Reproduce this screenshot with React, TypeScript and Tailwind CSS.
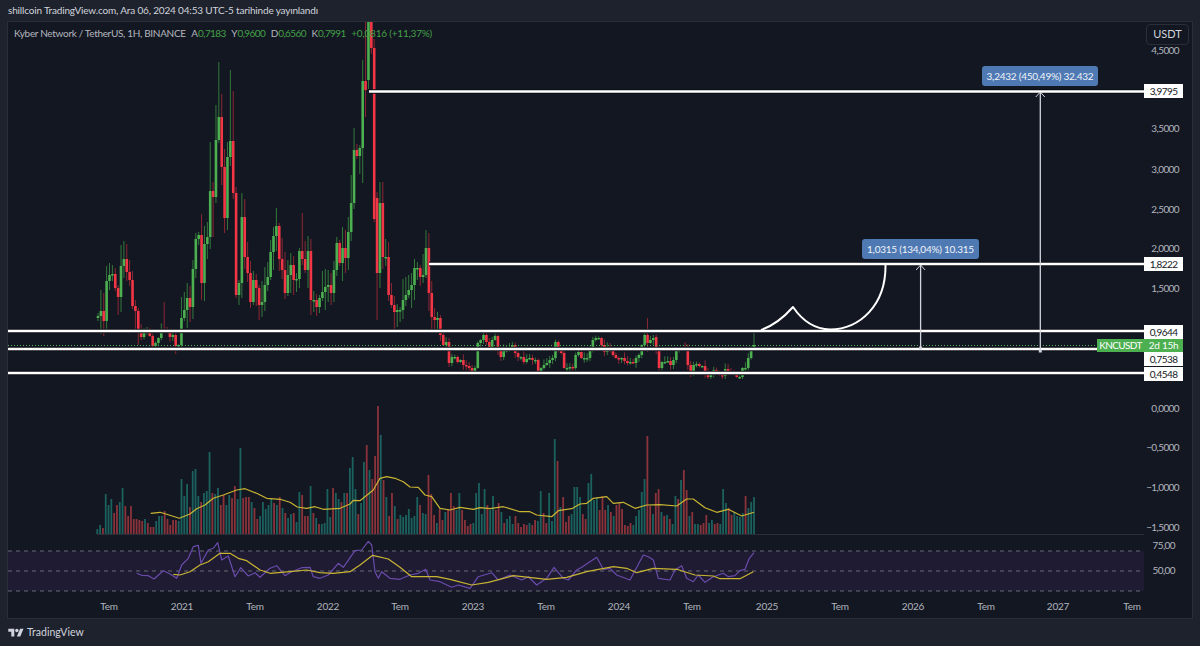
// KNCUSDT chart snapshot. Everything in the drawings is in page pixels (viewBox = page coords).
const closes = [
  316, 311, 321, 281, 275, 274, 288, 297, 266, 259, 272, 280, 306, 311, 330, 337, 333, 331, 336, 346, 343, 338, 329, 331, 332, 337, 335, 346,
  345, 318, 310, 298, 307, 269, 239, 235, 283, 244, 237, 191, 197, 140, 117, 167, 218, 157, 141, 193, 295, 283, 217, 257, 273, 302,
  280, 288, 305, 302, 285, 277, 252, 236, 226, 259, 270, 293, 275, 265, 280, 279, 251, 259, 270, 251, 300, 300, 307, 298, 292, 287, 285, 293, 270, 243, 263, 248, 258, 232, 203, 150, 156, 148, 81,
  90, 22, 48, 219, 273, 203, 257, 257, 295, 305, 312, 310, 310, 300, 295, 290, 285, 268, 268, 277, 275, 248, 293, 317, 320, 318, 335,
  345, 342, 363, 357, 357, 362, 360, 365, 366, 368, 373, 368, 343, 340, 335, 342, 347, 340, 336, 350, 357, 350, 350, 347, 345, 353, 357, 357, 362, 359, 358, 360, 360, 372, 368, 365, 363, 360, 358, 342, 350, 353, 368, 368, 367, 368, 355, 352, 358, 358, 358, 350,
  340, 338, 338, 345, 352, 347, 350, 355, 358, 359, 358, 361, 363, 362, 363, 358, 355, 345, 335, 343, 340, 338, 350, 368, 362, 362, 361, 365, 360, 350, 349, 348, 349, 365, 373, 365, 364, 366, 366, 373, 377, 375, 370, 372, 375, 376, 369, 372, 373, 374, 377, 377, 368, 368, 358, 350, 345,
];

// hand-read opens and wicks where the generated ones would be visibly wrong
const opens: Record<number, number> = { 94: 80, 97: 198, 194: 337, 93: 81 };
const highs: Record<number, number> = { 23: 302, 39: 142, 41: 105, 42: 62, 43: 94, 46: 70, 47: 91, 50: 193, 62: 208, 71: 213, 88: 175, 89: 128, 93: 20, 94: 10, 95: 10, 98: 182, 191: 318, 228: 333 };
const lows: Record<number, number> = { 27: 354, 36: 300, 40: 237, 49: 305, 74: 315, 92: 183, 93: 117, 97: 320, 191: 352, 195: 373 };

const candleStep = (754 - 98) / (closes.length - 1);

const candles = closes.map((c, i) => {
  const o = opens[i] ?? (i === 0 ? 318 : closes[i - 1]);
  const top = Math.min(o, c);
  const bottom = Math.max(o, c);
  const amp = top < 325 ? 3 : 0.8;
  return {
    x: 98 + i * candleStep,
    top,
    bottom: Math.max(bottom, top + 1.5),
    up: c <= o,
    high: highs[i] ?? top - (1 + ((i * 13) % 7)) * amp,
    low: lows[i] ?? Math.min(bottom + (1 + ((i * 5) % 6)) * amp, 379),
  };
});

// negative = red bar
const volumes = [
  5, 9, -6, 40, 29, 35, -21, -29, 32, 46, -28, -18, -28, -15, -15, -14, -13, 15, -11, -7, -7, 13, 18, 18, -23, -15, -9, -14, -14, 13, 55, 38, 50, -27, 63, 65, 38, -32, 41, 43, 82, -41, 40, 46, -29, -39, 29, 39, -36, -48, 35, 86, -36, -37, -37, 32, -26, -15, 18, 32, 25, 29, 35, -31, 29, -37, 26, -21, 16, 20, -21, 12, 42, -39, -18, -18, 48, -21, 16, -10, 10, 11, 45, 17, -46, 41, 35, -32, 41, -41, 66, 77, 45, -20, 31, 72, -89, 64, -55, -78, -128, 99, -54, 37, -18, -41, 28, -15, 19, 17, 19, 25, 16, 18, 37, -29, 21, 20, -59, -40, -19, 11,
  -25, -14, 22, -25, -41, -28, 24, 41, -24, -14, -8, -10, 11, 41, 51, 20, 45, -29, 24, 38, -24, -31, 22, -11, 15, 18, 10, -18, -11, -7, -10, -9, 11, -9, -14, 13, 43, -21, -11, 41, 13, 95, -73, 27, -37, -12, -18, 20, 47, 47, 37, -20, -15, 51, 60, 34, 37, -24, -38, -24, 29, -22, 18, -29, -31, -25, -9, -8, -11, 9, 18, 24, 42, 55, -98, -28, 20, -41, -45, 22, -18, 19, -15, 10, 38, -35, 54, -64, -44, 18, -22, 10, 10, -9, -11, -19, 11, 14, -10, -11, 10, 45, 31, -26, -19, 22, 18, 17, 21, -38, 26, 32, 37,
];
const volumeStep = (754 - 97.3) / (volumes.length - 1);

const pairs = (list: number[][], ox: number, oy: number) =>
  list.map(([x, y]) => `${(ox + x / 3).toFixed(1)},${(oy + y / 3).toFixed(1)}`).join(" ");

const volumeMa =
  pairs([[182, 340], [210, 337], [230, 343], [268, 355], [300, 342], [320, 326], [345, 315], [370, 295], [400, 285], [440, 270], [465, 266], [500, 280], [530, 295], [570, 298], [600, 307], [622, 321], [650, 325], [675, 320], [700, 328], [750, 325], [780, 312], [790, 301], [810, 302], [850, 270], [870, 235], [890, 230], [915, 235], [940, 245], [960, 261], [985, 262], [1005, 285], [1025, 290], [1050, 325]], 90, 400) +
  " " +
  pairs([[0, 325], [30, 330], [60, 322], [100, 328], [120, 323], [150, 326], [190, 320], [240, 335], [270, 335], [290, 345], [335, 350], [355, 332], [395, 326], [420, 312], [440, 310], [460, 295], [500, 290], [520, 310], [550, 307], [585, 325], [620, 315], [660, 314], [710, 318], [740, 297], [760, 297], [795, 323], [830, 337], [865, 328], [905, 348], [942, 337]], 440, 400);

const rsi =
  pairs([[410, 130], [425, 136], [445, 137], [462, 147], [490, 122], [510, 132], [530, 145], [545, 105], [565, 85], [580, 50], [595, 46], [603, 100], [625, 60], [640, 55], [653, 38], [665, 90], [685, 78], [705, 140], [722, 113], [745, 138], [765, 128], [780, 142], [810, 115], [830, 107], [855, 137], [875, 125], [905, 113], [930, 112], [940, 140], [960, 145], [985, 135], [1015, 100], [1030, 112], [1065, 62], [1085, 60], [1105, 34], [1115, 45], [1125, 125], [1135, 145], [1145, 125], [1170, 145]], 0, 530) +
  " " +
  pairs([[0, 148], [30, 135], [55, 130], [77, 118], [90, 150], [120, 155], [155, 172], [175, 165], [210, 175], [235, 140], [275, 128], [295, 150], [330, 135], [365, 150], [385, 140], [410, 165], [440, 145], [462, 112], [490, 145], [505, 150], [530, 120], [545, 112], [590, 82], [610, 118], [630, 115], [650, 135], [690, 150], [730, 75], [745, 80], [760, 90], [775, 145], [810, 150], [825, 120], [845, 107], [860, 145], [880, 155], [895, 135], [915, 157], [940, 140], [970, 130], [985, 140], [1005, 137], [1020, 122], [1035, 118], [1048, 85], [1062, 68]], 400, 530);

const rsiMa =
  pairs([[520, 133], [540, 135], [570, 125], [600, 105], [625, 95], [660, 70], [690, 70], [715, 85], [740, 92], [780, 120], [810, 130], [870, 125], [920, 120], [960, 128], [1000, 130], [1050, 125], [1080, 105], [1118, 76], [1165, 87]], 0, 530) +
  " " +
  pairs([[0, 112], [35, 140], [110, 140], [150, 148], [215, 165], [265, 157], [340, 137], [440, 148], [500, 142], [560, 125], [640, 110], [680, 115], [710, 128], [760, 115], [830, 118], [885, 135], [940, 138], [960, 146], [1020, 146], [1060, 125]], 400, 530);

const levels = [
  { y: 91.5, from: 369 },
  { y: 264, from: 429 },
  { y: 331, from: 8 },
  { y: 349, from: 8 },
  { y: 373, from: 8 },
];

const priceTicks = [
  { label: "4,5000", y: 50 },
  { label: "3,5000", y: 128 },
  { label: "3,0000", y: 169 },
  { label: "2,5000", y: 209 },
  { label: "2,0000", y: 248 },
  { label: "1,5000", y: 288 },
  { label: "0,0000", y: 408 },
  { label: "−0,5000", y: 447 },
  { label: "−1,0000", y: 487 },
  { label: "−1,5000", y: 527 },
];

const timeTicks = [
  { label: "Tem", x: 109 },
  { label: "2021", x: 182 },
  { label: "Tem", x: 255 },
  { label: "2022", x: 328 },
  { label: "Tem", x: 400 },
  { label: "2023", x: 473 },
  { label: "Tem", x: 546 },
  { label: "2024", x: 619 },
  { label: "Tem", x: 692 },
  { label: "2025", x: 767 },
  { label: "Tem", x: 840 },
  { label: "2026", x: 913 },
  { label: "Tem", x: 986 },
  { label: "2027", x: 1058 },
  { label: "Tem", x: 1132 },
];

const whiteTags = [
  { label: "3,9795", y: 84 },
  { label: "1,8222", y: 257 },
  { label: "0,9644", y: 325 },
  { label: "0,7538", y: 352 },
  { label: "0,4548", y: 367 },
];

const Arrow = ({ x, top, bottom }: { x: number; top: number; bottom: number }) => (
  <g stroke="#d1d4dc" fill="none">
    <line x1={x} y1={top} x2={x} y2={bottom} strokeWidth="1.3" />
    <path d={`M${x - 4.5} ${top + 5} L${x} ${top} L${x + 4.5} ${top + 5}`} strokeWidth="1" />
    <rect x={x - 1.5} y={bottom - 1.5} width="3" height="3" fill="#d1d4dc" stroke="none" />
  </g>
);

const PriceChart = () => (
  <svg className="block w-[1136px] h-[513px]" viewBox="8 22 1136 513">
    {/* candles */}
    {candles.map((c, i) => (
      <g key={i}>
        <line x1={c.x} x2={c.x} y1={c.high} y2={c.low} stroke={c.up ? "#3f9a45" : "#b52c3a"} strokeWidth="1" opacity="0.75" />
        <rect x={c.x - 1.3} y={c.top} width="2.6" height={c.bottom - c.top} fill={c.up ? "#4caf50" : "#f23645"} />
      </g>
    ))}

    {/* volume */}
    {volumes.map((v, i) => (
      <rect key={i} x={97.3 + i * volumeStep - 0.9} y={534 - Math.abs(v)} width="1.8" height={Math.abs(v)} fill={v < 0 ? "#8a333b" : "#1b625e"} />
    ))}
    <line x1="97" x2="1144" y1="534.5" y2="534.5" stroke="#2a2e39" strokeWidth="1" />
    <polyline points={volumeMa} fill="none" stroke="#c9b532" strokeWidth="1.2" strokeLinejoin="round" />

    {/* drawn levels */}
    <line x1="8" x2="1098" y1="345.5" y2="345.5" stroke="#4caf50" strokeWidth="1" strokeDasharray="1 2" />
    {levels.map((l) => (
      <g key={l.y}>
        <line x1={l.from} x2="1144" y1={l.y} y2={l.y} stroke="#0b0e14" strokeWidth="4.5" />
        <line x1={l.from} x2="1144" y1={l.y} y2={l.y} stroke="#ffffff" strokeWidth="2.4" />
      </g>
    ))}
    <path d="M761 330 Q778 324 793 307 Q808 329 830 329.5 C860 329 886 305 885.5 265" fill="none" stroke="#ffffff" strokeWidth="2" strokeLinejoin="round" />
    <Arrow x={920.6} top={265} bottom={348} />
    <Arrow x={1040.3} top={92} bottom={351} />
  </svg>
);

const RsiPane = () => (
  <svg className="block w-[1136px] h-[62px]" viewBox="8 535 1136 62">
    <rect x="8" y="551" width="1136" height="40" fill="#1e1b33" />
    {[551, 571, 591].map((y) => (
      <line key={y} x1="8" x2="1144" y1={y} y2={y} stroke="#696c77" strokeWidth="1" strokeDasharray="4 4" />
    ))}
    <polyline points={rsi} fill="none" stroke="#6a4bab" strokeWidth="1.2" strokeLinejoin="round" />
    <polyline points={rsiMa} fill="none" stroke="#c9b532" strokeWidth="1.2" strokeLinejoin="round" />
  </svg>
);

const LegendValue = ({ name, value }: { name: string; value: string }) => (
  <span>
    {name}
    <span className="text-[#43a047] tracking-[-0.6px]">{value}</span>
  </span>
);

const Legend = () => (
  <div className="absolute left-[6px] top-[5px] flex items-center gap-[5.5px] text-[10px] leading-[13px] whitespace-nowrap text-[#b2b5be]">
    <span className="tracking-[-0.32px]">Kyber Network / TetherUS, 1H, BINANCE</span>
    <LegendValue name="A" value="0,7183" />
    <LegendValue name="Y" value="0,9600" />
    <LegendValue name="D" value="0,6560" />
    <LegendValue name="K" value="0,7991" />
    <span className="text-[#43a047] tracking-[-0.2px]">+0,0816 (+11,37%)</span>
  </div>
);

const MeasureTag = ({ children, className }: { children: string; className: string }) => (
  <div className={`absolute h-[20px] rounded-[3px] bg-[#4e79b3] flex items-center justify-center text-[10px] tracking-[-0.24px] text-[#f0f3fa] whitespace-nowrap ${className}`}>
    {children}
  </div>
);

export default function App() {
  return (
    <div
      className="w-[1200px] h-[646px] overflow-hidden bg-[#1e222d] flex flex-col text-[#d1d4dc]"
      style={{ fontFamily: 'Lato, "Liberation Sans", sans-serif' }}
    >
      <div className="h-[21px] pl-2 flex items-center text-[10px] tracking-[-0.17px] text-[#d1d4dc] whitespace-nowrap">
        shillcoin TradingView.com, Ara 06, 2024 04:53 UTC-5 tarihinde yayınlandı
      </div>

      <div className="relative ml-[7px] w-[1186px] h-[598px] border border-[#2a2e39] bg-[#131722] flex overflow-hidden">
        <div className="w-[1136px] flex flex-col">
          <PriceChart />
          <RsiPane />
          <div className="relative h-[21px] text-[10px] tracking-[-0.2px] text-[#b2b5be]">
            {timeTicks.map((t) => (
              <span key={t.x} className="absolute top-[2px] -translate-x-1/2" style={{ left: t.x - 8 }}>
                {t.label}
              </span>
            ))}
          </div>
        </div>

        <div className="relative flex-1 text-[10px] tracking-[-0.6px] text-[#b2b5be]">
          {priceTicks.map((t) => (
            <span key={t.label} className="absolute right-[13px] leading-[14px]" style={{ top: t.y - 29 }}>
              {t.label}
            </span>
          ))}
          <span className="absolute right-[17px] top-[516px] leading-[14px]">75,00</span>
          <span className="absolute right-[17px] top-[541px] leading-[14px]">50,00</span>
          {whiteTags.map((t) => (
            <div
              key={t.label}
              className="absolute left-0 w-[39px] h-[14px] bg-white text-[#131722] flex items-center justify-center"
              style={{ top: t.y - 22 }}
            >
              {t.label}
            </div>
          ))}
          <div className="absolute left-0 top-[317px] w-[39px] h-[13px] bg-[#4caf50] text-white tracking-[-0.3px] flex items-center justify-center">
            2d 15h
          </div>
          <div className="absolute left-[2px] top-[2px] w-[43px] h-[21px] rounded border border-[#2a2e39] bg-[#131722] flex items-center justify-center text-[11px] tracking-normal text-[#d1d4dc]">
            USDT
          </div>
        </div>

        <Legend />
        <MeasureTag className="left-[974px] top-[44px] w-[116px]">3,2432 (450,49%) 32.432</MeasureTag>
        <MeasureTag className="left-[854px] top-[217px] w-[117px]">1,0315 (134,04%) 10.315</MeasureTag>
        <div className="absolute left-[1089px] top-[317px] w-[47px] h-[13px] bg-[#4caf50] text-white text-[10px] tracking-[-0.6px] flex items-center justify-center">
          KNCUSDT
        </div>
      </div>

      <div className="flex-1 pl-2 flex items-center gap-[3px] text-[#d1d4dc]">
        <svg width="16" height="12" viewBox="0 0 36 28" fill="currentColor">
          <path d="M14 22H7V11H0V4h14v18zM28 22h-8l7.5-18h8L28 22z" />
          <circle cx="20" cy="8" r="4" />
        </svg>
        <span className="text-[10.5px]">TradingView</span>
      </div>
    </div>
  );
}
